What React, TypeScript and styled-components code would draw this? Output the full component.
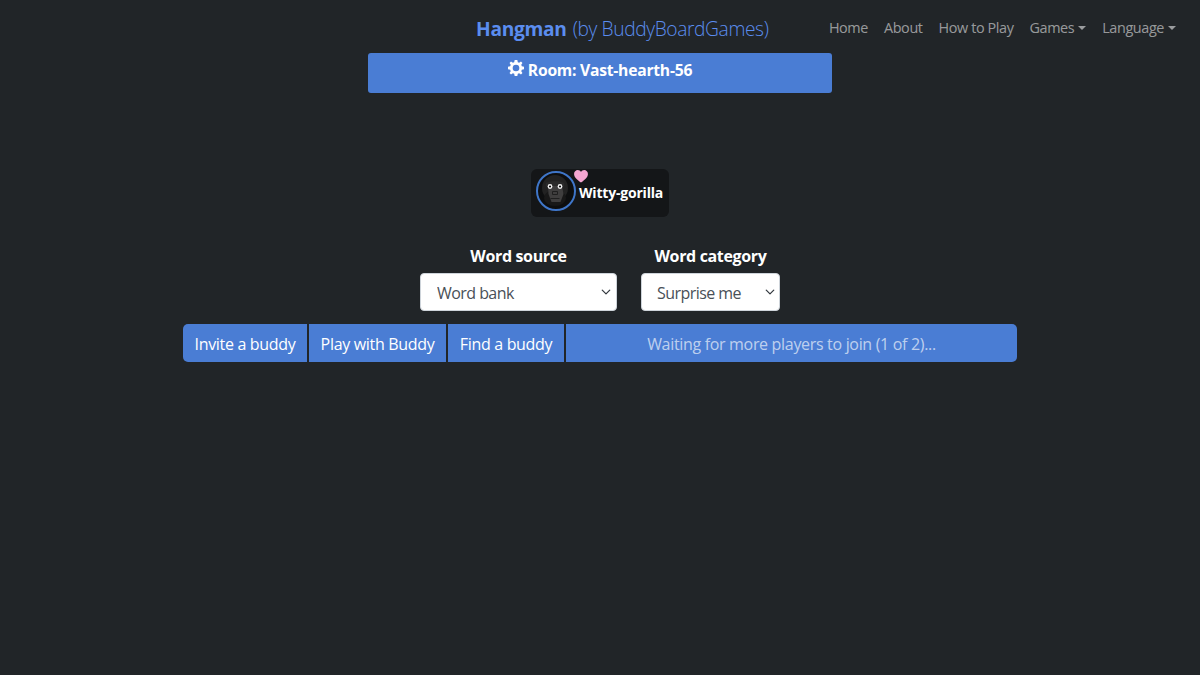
import React from 'react';
import styled, { createGlobalStyle } from 'styled-components';

const GlobalStyle = createGlobalStyle`
  html, body {
    margin: 0;
    padding: 0;
    height: 100%;
    background: #212528;
  }
  body {
    font-family: "Open Sans", "Noto Sans", "Liberation Sans", sans-serif;
    color: #fff;
  }
`;

const Page = styled.div`
  min-height: 675px;
  background: #212528;
  display: flex;
  flex-direction: column;
  align-items: center;
`;

const Navbar = styled.nav`
  width: 100%;
  box-sizing: border-box;
  height: 53px;
  padding: 4px 24px 0 476px;
  display: flex;
  align-items: center;
  justify-content: space-between;
`;

const Brand = styled.a`
  font-size: 19.2px;
  color: #5b8def;
  white-space: nowrap;

  strong {
    font-weight: 700;
    letter-spacing: -0.3px;
  }
  span {
    font-weight: 300;
    letter-spacing: -0.38px;
    margin-left: 1px;
  }
`;

const NavList = styled.div`
  display: flex;
  gap: 16px;
  margin-top: -3px;
`;

const NavItem = styled.a<{ $caret?: boolean }>`
  font-size: 14.4px;
  letter-spacing: -0.39px;
  color: rgba(255, 255, 255, 0.55);
  white-space: nowrap;

  ${(p) =>
    p.$caret &&
    `
    &::after {
      content: "";
      display: inline-block;
      margin-left: 4px;
      vertical-align: 3px;
      border-top: 4px solid;
      border-left: 4px solid transparent;
      border-right: 4px solid transparent;
    }
  `}
`;

const RoomBanner = styled.div`
  width: 464px;
  height: 40px;
  box-sizing: border-box;
  background: #4a7dd4;
  border-radius: 3px;
  display: flex;
  justify-content: center;
  align-items: flex-start;
  gap: 4px;
  padding-top: 6px;
  font-size: 15.7px;
  font-weight: 700;
  letter-spacing: -0.25px;
  line-height: 23px;
`;

const GearIcon = styled.svg`
  width: 16px;
  height: 16px;
  margin-top: 1px;
`;

const PlayerCard = styled.div`
  position: relative;
  margin-top: 76px;
  width: 138px;
  height: 48px;
  box-sizing: border-box;
  padding: 2px 5px;
  background: #141618;
  border-radius: 6px;
  display: flex;
  align-items: flex-start;
`;

const AvatarRing = styled.div`
  width: 40px;
  height: 40px;
  box-sizing: border-box;
  border: 2px solid #3f76c9;
  border-radius: 50%;
  background: #0d0e0f;
  flex: none;
  display: flex;
  align-items: center;
  justify-content: center;
  overflow: hidden;
`;

const Heart = styled.svg`
  position: absolute;
  left: 43px;
  top: 1px;
  width: 14px;
  height: 13px;
`;

const PlayerName = styled.div`
  margin: 13px 0 0 3px;
  font-size: 14px;
  font-weight: 700;
  letter-spacing: -0.2px;
  line-height: 18px;
  white-space: nowrap;
`;

const OptionsRow = styled.div`
  margin-top: 27px;
  display: flex;
  gap: 24px;
`;

const OptionColumn = styled.div<{ $width: number }>`
  width: ${(p) => p.$width}px;
  display: flex;
  flex-direction: column;
  align-items: center;
`;

const OptionLabel = styled.label`
  font-size: 16px;
  font-weight: 700;
  letter-spacing: -0.35px;
  line-height: 24px;
  height: 29px;
  white-space: nowrap;
`;

const Select = styled.select<{ $pad: number; $arrow: number }>`
  appearance: none;
  width: 100%;
  height: 38px;
  box-sizing: border-box;
  padding: 2px 20px 0 ${(p) => p.$pad}px;
  font-family: inherit;
  font-size: 16px;
  letter-spacing: -0.55px;
  color: #495057;
  background-color: #fff;
  background-image: url("data:image/svg+xml,%3csvg xmlns='http://www.w3.org/2000/svg' viewBox='0 0 16 16'%3e%3cpath fill='none' stroke='%23343a40' stroke-linecap='round' stroke-linejoin='round' stroke-width='2' d='M2 5l6 6 6-6'/%3e%3c/svg%3e");
  background-repeat: no-repeat;
  background-position: right ${(p) => p.$arrow}px center;
  background-size: 10px 10px;
  border: 1px solid #ced4da;
  border-radius: 4px;
`;

const ButtonRow = styled.div`
  margin-top: 13px;
  width: 834px;
  display: flex;
  gap: 2px;
`;

const GroupButton = styled.button<{ $width?: number; $muted?: boolean }>`
  flex: ${(p) => (p.$width ? `0 0 ${p.$width}px` : '1')};
  height: 38px;
  padding: 2px 0 0;
  border: none;
  background: #4a7dd4;
  font-family: inherit;
  font-size: 16px;
  letter-spacing: -0.32px;
  color: ${(p) => (p.$muted ? 'rgba(255, 255, 255, 0.65)' : '#fff')};
  white-space: nowrap;

  &:first-child {
    border-radius: 5px 0 0 5px;
  }
  &:last-child {
    border-radius: 0 5px 5px 0;
  }
`;

const Gear = () => (
  <GearIcon viewBox="0 0 24 24">
    <path
      fill="#fff"
      fillRule="evenodd"
      d="M10 0h4l.7 3.300 2 .8 2.800-1.800 2.200 2.200-1.800 2.800.8 2 3.300.7v4l-3.300.7-.8 2 1.800 2.800-2.200 2.200-2.800-1.800-2 .8L14 24h-4l-.7-3.300-2-.8-2.800 1.800-2.200-2.200 1.800-2.800-.8-2L0 14v-4l3.300-.7.8-2L2.300 4.500l2.200-2.200 2.800 1.800 2-.8L10 0zm2 7a5 5 0 1 0 0 10 5 5 0 0 0 0-10z"
    />
  </GearIcon>
);

const Gorilla = () => (
  <svg width="36" height="36" viewBox="0 0 36 36">
    <ellipse cx="17" cy="15" rx="13" ry="13" fill="#222" />
    <ellipse cx="17" cy="25" rx="11" ry="8" fill="#181818" />
    <path d="M10 13h14l1.500 8-3 8h-9l-3-8z" fill="#3f3e3e" />
    <path d="M8 10c3-2.500 15-2.500 18 0v3H8z" fill="#2b2b2b" />
    <circle cx="12" cy="13.500" r="2.400" fill="#f2f2f2" />
    <circle cx="22" cy="13.500" r="2.400" fill="#f2f2f2" />
    <circle cx="12" cy="13.500" r="1.100" fill="#111" />
    <circle cx="22" cy="13.500" r="1.100" fill="#111" />
    <path d="M14.500 18.500h5v3h-5zM12.500 25.500h9" stroke="#1f1f1f" strokeWidth="1" fill="none" />
  </svg>
);

export default function App() {
  return (
    <Page>
      <GlobalStyle />
      <Navbar>
        <Brand>
          <strong>Hangman</strong> <span>(by BuddyBoardGames)</span>
        </Brand>
        <NavList>
          <NavItem>Home</NavItem>
          <NavItem>About</NavItem>
          <NavItem>How to Play</NavItem>
          <NavItem $caret>Games</NavItem>
          <NavItem $caret>Language</NavItem>
        </NavList>
      </Navbar>
      <RoomBanner>
        <Gear />
        Room: Vast-hearth-56
      </RoomBanner>
      <PlayerCard>
        <AvatarRing>
          <Gorilla />
        </AvatarRing>
        <Heart viewBox="0 0 16 15">
          <path
            fill="#f5a6d2"
            d="M8 14.500C3 10.500 0 8 0 4.500 0 2 2 0 4.300 0 5.800 0 7.200.8 8 2.200 8.800.8 10.200 0 11.700 0 14 0 16 2 16 4.500c0 3.500-3 6-8 10z"
          />
        </Heart>
        <PlayerName>Witty-gorilla</PlayerName>
      </PlayerCard>
      <OptionsRow>
        <OptionColumn $width={197}>
          <OptionLabel>Word source</OptionLabel>
          <Select $pad={16} $arrow={5} defaultValue="bank">
            <option value="bank">Word bank</option>
          </Select>
        </OptionColumn>
        <OptionColumn $width={139}>
          <OptionLabel>Word category</OptionLabel>
          <Select $pad={15} $arrow={4} defaultValue="surprise">
            <option value="surprise">Surprise me</option>
          </Select>
        </OptionColumn>
      </OptionsRow>
      <ButtonRow>
        <GroupButton $width={124}>Invite a buddy</GroupButton>
        <GroupButton $width={137}>Play with Buddy</GroupButton>
        <GroupButton $width={116}>Find a buddy</GroupButton>
        <GroupButton $muted>Waiting for more players to join (1 of 2)...</GroupButton>
      </ButtonRow>
    </Page>
  );
}
